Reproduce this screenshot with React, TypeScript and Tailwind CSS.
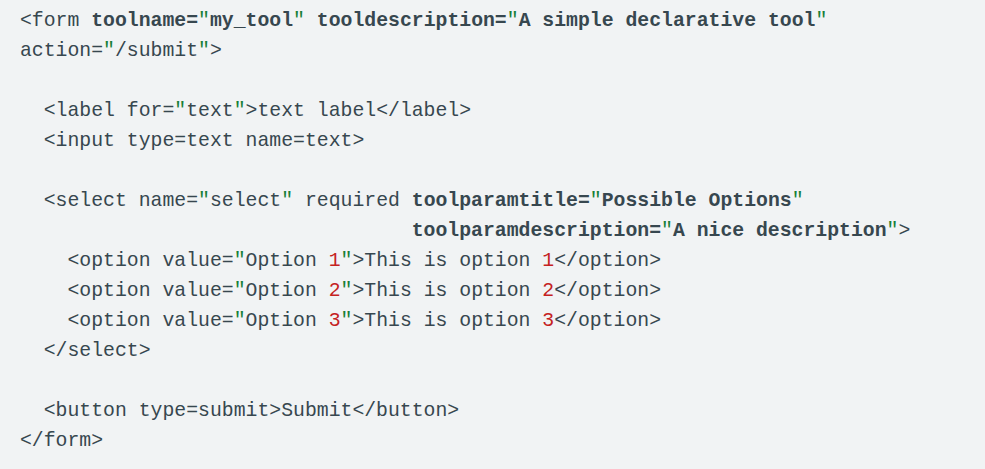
type Seg = { t: string; k?: "b" | "q" | "n" };

const T = (t: string): Seg => ({ t });
const B = (t: string): Seg => ({ t, k: "b" });
const Q: Seg = { t: '"', k: "q" };
const N = (t: string): Seg => ({ t, k: "n" });

const lines: Seg[][] = [
  [T("<form "), B("toolname="), Q, B("my_tool"), Q, T(" "), B("tooldescription="), Q, B("A simple declarative tool"), Q],
  [T("action="), Q, T("/submit"), Q, T(">")],
  [],
  [T("  <label for="), Q, T("text"), Q, T(">text label</label>")],
  [T("  <input type=text name=text>")],
  [],
  [T("  <select name="), Q, T("select"), Q, T(" required "), B("toolparamtitle="), Q, B("Possible Options"), Q],
  [T(" ".repeat(33)), B("toolparamdescription="), Q, B("A nice description"), Q, T(">")],
  [T("    <option value="), Q, T("Option "), N("1"), Q, T(">This is option "), N("1"), T("</option>")],
  [T("    <option value="), Q, T("Option "), N("2"), Q, T(">This is option "), N("2"), T("</option>")],
  [T("    <option value="), Q, T("Option "), N("3"), Q, T(">This is option "), N("3"), T("</option>")],
  [T("  </select>")],
  [],
  [T("  <button type=submit>Submit</button>")],
  [T("</form>")],
];

function Piece({ s }: { s: Seg }) {
  if (s.k === "b") return <span className="font-bold">{s.t}</span>;
  if (s.k === "q") return <span className="text-[#188038]">{s.t}</span>;
  if (s.k === "n") return <span className="text-[#c5221f]">{s.t}</span>;
  return <span>{s.t}</span>;
}

export default function App() {
  return (
    <div className="w-[985px] h-[469px] bg-[#f1f3f4] overflow-hidden">
      <pre className="pl-5 pt-[6px] font-['Liberation_Mono',monospace] text-[19.8px] leading-[30px] text-[#37474f]">
        {lines.map((line, i) => (
          <div key={i} className="h-[30px] whitespace-pre">
            {line.map((s, j) => (
              <Piece key={j} s={s} />
            ))}
          </div>
        ))}
      </pre>
    </div>
  );
}
